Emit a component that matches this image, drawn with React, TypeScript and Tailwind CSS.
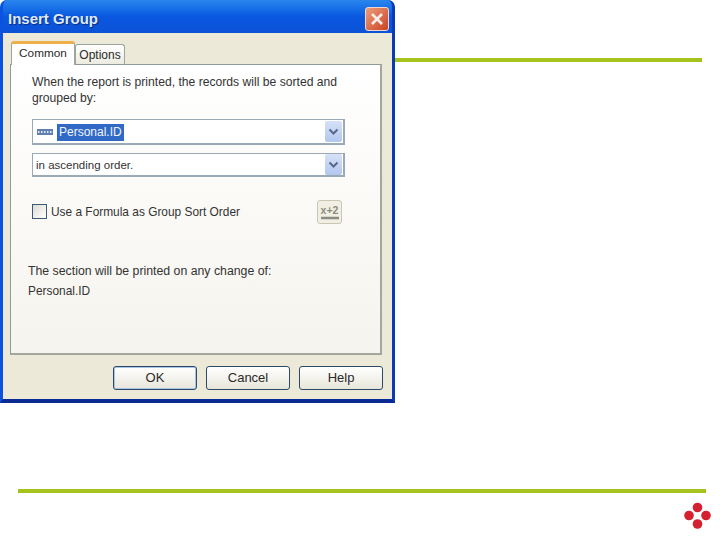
const font = "font-['Liberation_Sans',Arial,sans-serif]";

function Chevron() {
    return (
        <svg width="11" height="8" viewBox="0 0 11 8" fill="none">
            <path d="M1.5 1.5 L5.5 5.5 L9.5 1.5" stroke="#56688c" strokeWidth="2" />
        </svg>
    );
}

function SelectBox({ className, children }: { className: string, children: React.ReactNode }) {
    return (
        <div className={"ml-[21px] w-[313px] flex items-center bg-white border border-[#9aa9b6] border-b-2 border-r-2 pr-[1px] " + className}>
            <div className="flex-1 flex items-center min-w-0">{children}</div>
            <div className="w-[17px] h-[21px] flex items-center justify-center rounded-[2px] bg-gradient-to-b from-[#d5e1f6] to-[#b3c7ee]">
                <Chevron />
            </div>
        </div>
    );
}

function DialogButton({ label, isDefault }: { label: string, isDefault?: boolean }) {
    return (
        <button className={"h-[24px] w-[84px] rounded-[3px] border border-[#2b4a68] bg-gradient-to-b from-white to-[#e8e6da] text-[13px] text-[#2a2a2a] " + (isDefault ? "shadow-[inset_0_0_0_1px_#a9c4e6]" : "")}>
            {label}
        </button>
    );
}

export default function App() {
    return (
        <div className={"w-[720px] h-[540px] bg-white overflow-hidden flex flex-col " + font}>
            <div className="flex items-start">
                {/* dialog window */}
                <div className="w-[395px] h-[403px] shrink-0 flex flex-col rounded-t-[7px] overflow-hidden bg-[#0a3fc4] border-b-[4px] border-b-[#0a2a94] border-r-[3px] border-r-[#0b3ab8] border-l-[3px] border-l-[#0b52de]">
                    <div className="h-[33px] shrink-0 flex items-center justify-between pl-[5px] pr-[3px] pt-[4px] bg-gradient-to-b from-[#2a86ee] via-[#0a58e0] to-[#0c52d6]">
                        <span className="mt-[1px] text-[15px] font-bold text-[#dfeaf8] [text-shadow:1px_1px_1px_#0a2a80]">Insert Group</span>
                        <div className="w-[24px] h-[24px] flex items-center justify-center rounded-[3px] border border-[#f0d8d0] bg-gradient-to-br from-[#ec9c7e] to-[#c8421f]">
                            <svg width="14" height="14" viewBox="0 0 14 14">
                                <path d="M2 2 L12 12 M12 2 L2 12" stroke="#fbeee8" strokeWidth="2.6" />
                            </svg>
                        </div>
                    </div>
                    <div className="flex-1 flex flex-col bg-[#ece9d8] pl-[7px] pr-[9px] pt-[8px]">
                        <div className="flex items-end h-[23px] pl-[1px]">
                            <div className="relative z-10 w-[64px] h-[24px] -mb-[1px] rounded-t-[3px] bg-white border-x border-x-[#9aa59c] border-t-[3px] border-t-[#eeb04a] text-[11.8px] text-[#2a2a2a] text-center leading-[18px]">
                                Common
                            </div>
                            <div className="w-[50px] h-[20px] rounded-t-[3px] bg-gradient-to-b from-white to-[#ecebe0] border border-b-0 border-[#9aa59c] text-[12px] text-[#2a2a2a] text-center leading-[21px]">
                                Options
                            </div>
                        </div>
                        <div className="w-[372px] h-[291px] border border-[#8f9c96] border-r-2 border-b-2 border-r-[#a3a79e] border-b-[#a3a79e] bg-gradient-to-b from-white to-[#f6f4ee] flex flex-col text-[12px] text-[#333]">
                            <p className="ml-[21px] mt-[9px] leading-[16px] text-[12.15px]">
                                When the report is printed, the records will be sorted and
                                <br />
                                grouped by:
                            </p>
                            <SelectBox className="mt-[13px] h-[26px]">
                                <svg className="ml-[4px]" width="16" height="6" viewBox="0 0 16 6">
                                    <rect width="16" height="6" fill="#5f7fae" />
                                    <path d="M1 3 H15" stroke="#dfe8f5" strokeWidth="2" strokeDasharray="1.5 1.5" />
                                </svg>
                                <span className="ml-[4px] mt-[1px] px-[2px] h-[17px] leading-[17px] bg-[#3169c6] text-[#f2f6fc] text-[12px]">Personal.ID</span>
                            </SelectBox>
                            <SelectBox className="mt-[8px] h-[24px]">
                                <span className="ml-[3px] mt-[2px] text-[11.5px]">in ascending order.</span>
                            </SelectBox>
                            <div className="ml-[21px] mr-[38px] mt-[22px] h-[26px] flex items-center justify-between">
                                <div className="flex items-center">
                                    <div className="w-[15px] h-[15px] border border-[#3a5a76] bg-gradient-to-br from-[#dcdcd4] to-white"></div>
                                    <span className="ml-[4px] mt-[2px] text-[11.9px]">Use a Formula as Group Sort Order</span>
                                </div>
                                <div className="w-[25px] h-[24px] rounded-[3px] border border-[#c9c6b4] bg-[#f1efe4] flex flex-col items-center justify-center">
                                    <span className="text-[10.5px] font-bold leading-[11px] text-[#8c8c80]">x+2</span>
                                    <svg width="20" height="4" viewBox="0 0 20 4">
                                        <path d="M1 2 H19" stroke="#8c8c80" strokeWidth="2.4" />
                                    </svg>
                                </div>
                            </div>
                            <p className="ml-[17px] mt-[38px] leading-[16px] text-[12.3px]">The section will be printed on any change of:</p>
                            <p className="ml-[17px] mt-[4px] leading-[16px] text-[11.9px]">Personal.ID</p>
                        </div>
                        <div className="flex justify-end gap-[9px] mt-[11px] w-[373px]">
                            <DialogButton label="OK" isDefault />
                            <DialogButton label="Cancel" />
                            <DialogButton label="Help" />
                        </div>
                    </div>
                </div>
                <div className="mt-[58px] w-[307px] h-[4px] bg-[#a6c31d]"></div>
            </div>
            <div className="ml-[18px] mt-[86px] w-[688px] h-[4px] bg-[#a6c31d]"></div>
            <div className="ml-[683px] mt-[9px]">
                <svg width="28" height="28" viewBox="0 0 28 28">
                    <circle cx="14.5" cy="5.5" r="4.8" fill="#d4202f" />
                    <circle cx="6" cy="13.5" r="4.8" fill="#d4202f" />
                    <circle cx="23" cy="13.5" r="4.8" fill="#d4202f" />
                    <circle cx="14.5" cy="22" r="4.8" fill="#d4202f" />
                </svg>
            </div>
        </div>
    );
}
